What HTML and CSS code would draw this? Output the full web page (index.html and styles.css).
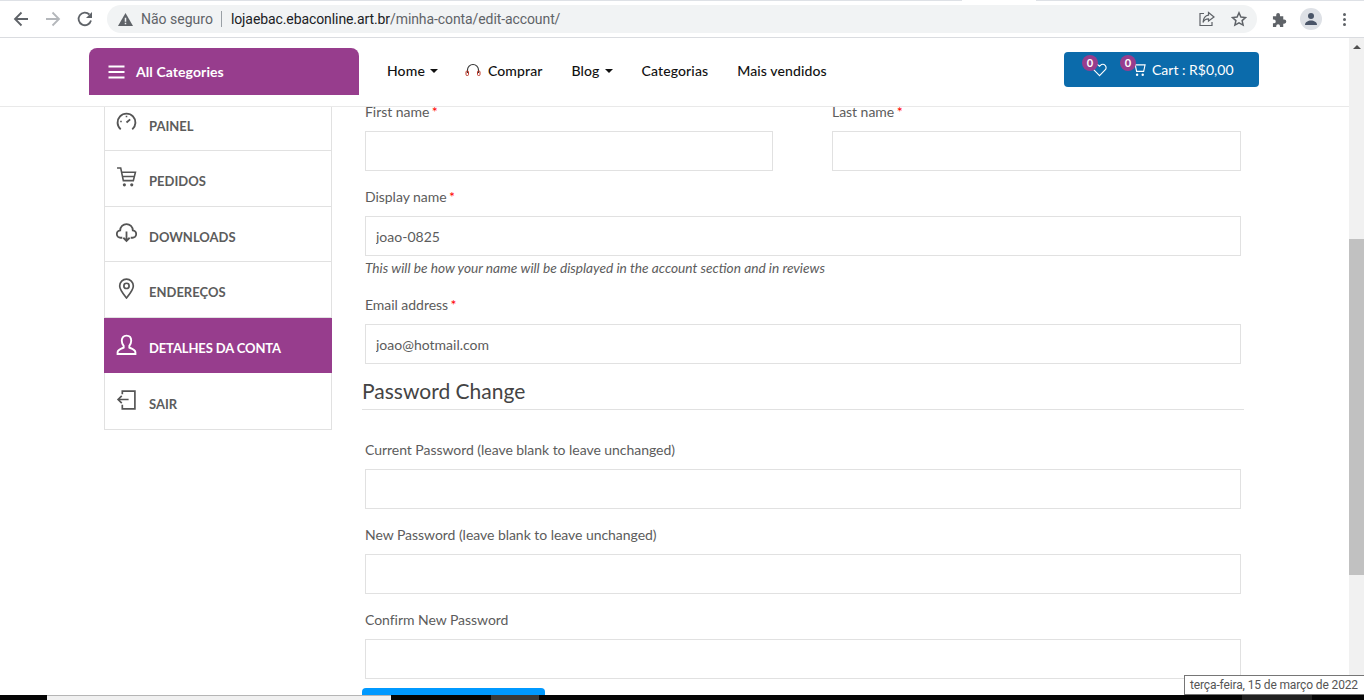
FILE: index.html
```html
<!DOCTYPE html>
<html lang="pt-BR">
<head>
    <meta charset="UTF-8">
    <title>Minha conta</title>
    <link rel="stylesheet" href="styles.css">
</head>
<body>
    <div class="toolbar">
        <svg class="tool-icon" viewBox="0 0 16 16"><path d="M15 8H2M8.500 1.500 2 8l6.500 6.500" fill="none" stroke="#5f6368" stroke-width="1.800"/></svg>
        <svg class="tool-icon" viewBox="0 0 16 16"><path d="M1 8h13M7.500 1.500 14 8l-6.500 6.500" fill="none" stroke="#b4b7bb" stroke-width="1.800"/></svg>
        <svg class="tool-icon" viewBox="0 0 16 16"><path d="M14 9.500A6.300 6.300 0 1 1 12.400 3.500" fill="none" stroke="#5f6368" stroke-width="1.800"/><path d="M15 1v6H9z" fill="#5f6368"/></svg>
        <div class="omnibox">
            <svg class="warn" viewBox="0 0 16 16"><path d="M8 1 16 15H0z" fill="#5f6368"/><path d="M7.200 6h1.600v4.500H7.200zM7.200 11.500h1.600V13H7.200z" fill="#f1f3f4"/></svg>
            <span class="insecure">Não seguro</span>
            <span class="url"><b>lojaebac.ebaconline.art.br</b>/minha-conta/edit-account/</span>
            <svg class="omni-icon share" viewBox="0 0 16 16"><path d="M5 2.500H1v12h12V11" fill="none" stroke="#5f6368" stroke-width="1.200"/><path d="M9.500 1.500 15 6l-5.500 4V7.800C7 7.800 5 9 4 11.500 4 7.500 6.500 4.500 9.500 4.200z" fill="none" stroke="#5f6368" stroke-width="1.200"/></svg>
            <svg class="omni-icon" viewBox="0 0 16 16"><path d="m8 1.800 1.900 4.200 4.600.5-3.400 3.100 1 4.500L8 11.800l-4.100 2.300 1-4.500L1.500 6.500l4.600-.5z" fill="none" stroke="#5f6368" stroke-width="1.500"/></svg>
        </div>
        <svg class="ext" viewBox="0 0 16 16"><path d="M1 4.500h3.500V3a2 2 0 0 1 4 0v1.500H12V8h1a2.200 2.200 0 0 1 0 4.500h-1V16H8.500v-1a2 2 0 0 0-4 0v1H1v-4h1a2 2 0 0 0 0-4H1z" fill="#5f6368"/></svg>
        <div class="avatar"><svg viewBox="0 0 16 16"><circle cx="8" cy="5" r="3" fill="#4a5568"/><path d="M2 14c0-3 3-4.500 6-4.500s6 1.500 6 4.500z" fill="#4a5568"/></svg></div>
        <div class="dots"><i></i><i></i><i></i></div>
    </div>

    <div class="viewport">
        <div class="page">
            <header class="site-header">
                <div class="categories">
                    <svg class="burger" viewBox="0 0 16 14"><path d="M0 1.500h16M0 7h16M0 12.500h16" stroke="#fff" stroke-width="2"/></svg>
                    All Categories
                </div>
                <nav class="main-nav">
                    <a>Home<i class="caret"></i></a>
                    <a class="buy">
                        <svg viewBox="0 0 16 16"><path d="M2.500 10V7a5.500 5.500 0 0 1 11 0v3" fill="none" stroke="#333" stroke-width="1.100"/><rect x="1" y="8" width="2.500" height="4.500" rx="1" fill="none" stroke="#c0392b"/><rect x="12.500" y="8" width="2.500" height="4.500" rx="1" fill="none" stroke="#c0392b"/></svg>
                        Comprar
                    </a>
                    <a>Blog<i class="caret"></i></a>
                    <a>Categorias</a>
                    <a>Mais vendidos</a>
                </nav>
                <div class="cart">
                    <span class="cart-icon wish">
                        <span class="badge">0</span>
                        <svg viewBox="0 0 16 16"><path d="M8 14.500 2 8.500a3.500 3.500 0 0 1 0-5 3.500 3.500 0 0 1 5 0l1 1 1-1a3.500 3.500 0 0 1 5 0 3.500 3.500 0 0 1 0 5z" fill="none" stroke="#fff" stroke-width="1.200"/></svg>
                    </span>
                    <span class="cart-icon basket">
                        <span class="badge">0</span>
                        <svg viewBox="0 0 16 16"><path d="M15 3H4.500L6 10h7.500L15 3zM1 1h2.500L4.500 3" fill="none" stroke="#fff" stroke-width="1.200"/><circle cx="6.500" cy="13.500" r="1.300" fill="#fff"/><circle cx="12.500" cy="13.500" r="1.300" fill="#fff"/></svg>
                    </span>
                    <span class="cart-total">Cart : R$0,00</span>
                </div>
            </header>

            <div class="account">
                <aside class="side-nav">
                    <a class="side-item">
                        <svg viewBox="0 0 20 20"><path d="M4.500 17.500a8.500 8.500 0 1 1 11 0M10 11l3.500-3" fill="none" stroke="#555" stroke-width="1.800"/><path d="M4 10h1.500M10 4.500V6" stroke="#555" stroke-width="1.500"/></svg>
                        Painel
                    </a>
                    <a class="side-item">
                        <svg viewBox="0 0 20 20"><path d="M1 1h3.500l2.500 12h9.500L18.500 5H5.200M6 9h11.500" fill="none" stroke="#555" stroke-width="1.500"/><circle cx="8" cy="17" r="1.500" fill="#555"/><circle cx="15" cy="17" r="1.500" fill="#555"/></svg>
                        Pedidos
                    </a>
                    <a class="side-item">
                        <svg viewBox="0 0 20 20"><path d="M6 15H4.500a3.500 3.500 0 0 1-.5-7 6 6 0 0 1 12 0 3.500 3.500 0 0 1-.5 7H14M10 9v9M7 15l3 3 3-3" fill="none" stroke="#555" stroke-width="1.700"/></svg>
                        Downloads
                    </a>
                    <a class="side-item">
                        <svg viewBox="0 0 20 20"><path d="M10 19C6 14 3.500 11 3.500 7.500a6.500 6.500 0 0 1 13 0C16.500 11 14 14 10 19z" fill="none" stroke="#555" stroke-width="1.600"/><circle cx="10" cy="7.500" r="2.500" fill="none" stroke="#555" stroke-width="1.600"/></svg>
                        Endereços
                    </a>
                    <a class="side-item active">
                        <svg viewBox="0 0 20 20"><path d="M10 1.500c3 0 4.500 2.200 4.500 5 0 2-.8 3.500-1.800 4.800V13c2 .8 5.800 1.800 5.800 4.500V19H1.500v-1.500C1.500 14.800 5.300 13.800 7.300 13v-1.700C6.300 10 5.500 8.500 5.500 6.500c0-2.800 1.500-5 4.500-5z" fill="none" stroke="#fff" stroke-width="1.800"/></svg>
                        Detalhes da conta
                    </a>
                    <a class="side-item">
                        <svg viewBox="0 0 20 20"><path d="M6 5V2h12v17H6v-4M12 10H2M5.500 6.500 2 10l3.500 3.500" fill="none" stroke="#555" stroke-width="1.600"/></svg>
                        Sair
                    </a>
                </aside>

                <form class="account-form">
                    <div class="name-row">
                        <label class="field">
                            <span class="label-text">First name <em>*</em></span>
                            <input type="text">
                        </label>
                        <label class="field">
                            <span class="label-text">Last name <em>*</em></span>
                            <input type="text">
                        </label>
                    </div>
                    <label class="field">
                        <span class="label-text">Display name <em>*</em></span>
                        <input type="text" value="joao-0825">
                        <span class="hint">This will be how your name will be displayed in the account section and in reviews</span>
                    </label>
                    <label class="field email">
                        <span class="label-text">Email address <em>*</em></span>
                        <input type="text" value="joao@hotmail.com">
                    </label>
                    <fieldset class="password-box">
                        <legend>Password Change</legend>
                        <label class="field">
                            <span class="label-text">Current Password (leave blank to leave unchanged)</span>
                            <input type="password">
                        </label>
                        <label class="field">
                            <span class="label-text">New Password (leave blank to leave unchanged)</span>
                            <input type="password">
                        </label>
                        <label class="field">
                            <span class="label-text">Confirm New Password</span>
                            <input type="password">
                        </label>
                    </fieldset>
                    <button type="button" class="save-btn"></button>
                </form>
            </div>
        </div>
        <div class="scrollbar">
            <span class="arrow"></span>
            <div class="thumb"></div>
        </div>
    </div>

    <div class="taskbar">
        <span class="task-a"></span>
        <span class="task-b"></span>
        <span class="task-c"></span>
    </div>
    <div class="date-tip">terça-feira, 15 de março de 2022</div>
</body>
</html>
```

FILE: styles.css
```css
* {
    box-sizing: border-box;
    margin: 0;
    padding: 0;
}

html, body {
    height: 700px;
    overflow: hidden;
}

body {
    display: flex;
    flex-direction: column;
    font-family: "Lato", sans-serif;
    font-size: 14px;
    color: #5c5c5c;
    background: #fff;
}

/* browser chrome */
.toolbar {
    height: 38px;
    flex: none;
    display: flex;
    align-items: center;
    padding: 0 0 0 13px;
    background: #fff;
    border-top: 1px solid #dee1e6;
    border-bottom: 1px solid #dadce0;
    position: relative;
}

.toolbar::before {
    content: "";
    position: absolute;
    left: 962px;
    top: -1px;
    width: 74px;
    height: 1px;
    background: #fff;
}

.tool-icon {
    width: 16px;
    height: 16px;
    margin-right: 16px;
}

.omnibox {
    width: 1150px;
    height: 28px;
    margin-left: -2px;
    display: flex;
    align-items: center;
    padding: 0 0 0 11px;
    background: #f1f3f4;
    border-radius: 14px;
    font-family: "Roboto", sans-serif;
    font-size: 14px;
}

.warn {
    width: 15px;
    height: 15px;
    margin-right: 8px;
}

.insecure {
    color: #5f6368;
    padding-right: 8px;
    border-right: 1px solid #9aa0a6;
    margin-right: 9px;
    line-height: 16px;
}

.url {
    color: #5f6368;
    flex: 1;
    letter-spacing: -0.09px;
}

.url b {
    font-weight: 400;
    color: #202124;
}

.omni-icon {
    width: 16px;
    height: 16px;
    margin-right: 10px;
}

.share {
    margin-right: 16px;
}

.ext {
    width: 15px;
    height: 15px;
    margin-left: 15px;
}

.avatar {
    width: 22px;
    height: 22px;
    margin-left: 13px;
    padding: 3px;
    border-radius: 50%;
    background: #dee1e6;
}

.avatar svg {
    display: block;
}

.dots {
    display: flex;
    flex-direction: column;
    gap: 2px;
    margin-left: 21px;
}

.dots i {
    width: 3px;
    height: 3px;
    border-radius: 50%;
    background: #5f6368;
}

/* page */
.viewport {
    flex: 1;
    min-height: 0;
    display: flex;
}

.page {
    flex: 1;
    min-width: 0;
    overflow: hidden;
    display: flex;
    flex-direction: column;
}

.site-header {
    height: 69px;
    flex: none;
    display: flex;
    padding: 10px 90px 0 89px;
    border-bottom: 1px solid #e9e9e9;
    position: relative;
    z-index: 1;
    background: #fff;
}

.categories {
    width: 270px;
    height: 47px;
    display: flex;
    align-items: center;
    gap: 11px;
    padding-left: 19px;
    background: #973d8d;
    border-radius: 8px 8px 0 0;
    color: #fff;
    font-size: 14px;
    font-weight: 700;
    letter-spacing: 0.08px;
}

.burger {
    width: 17px;
    height: 14px;
}

.main-nav {
    display: flex;
    align-items: center;
    gap: 29px;
    height: 45px;
    margin-left: 28px;
    flex: 1;
    font-size: 14px;
    font-weight: 500;
    letter-spacing: 0.12px;
    color: #111;
}

.main-nav a {
    display: flex;
    align-items: center;
}

.main-nav .buy {
    margin-left: -2px;
}

.buy svg {
    width: 16px;
    height: 16px;
    margin-right: 7px;
}

.caret {
    margin-left: 5px;
    border-top: 4px solid #111;
    border-left: 4px solid transparent;
    border-right: 4px solid transparent;
}

.cart {
    width: 195px;
    height: 35px;
    margin-top: 4px;
    display: flex;
    align-items: center;
    padding-left: 28px;
    background: #0b6bab;
    border-radius: 4px;
    color: #fff;
    font-size: 14px;
}

.cart-icon {
    position: relative;
    display: block;
    width: 15px;
    height: 15px;
}

.cart-icon svg {
    display: block;
    width: 15px;
    height: 15px;
}

.basket {
    margin-left: 24px;
    margin-right: 6px;
}

.badge {
    position: absolute;
    top: -7px;
    left: -10px;
    width: 16px;
    height: 16px;
    border-radius: 50%;
    background: #973d8d;
    font-size: 11px;
    font-weight: 700;
    line-height: 15px;
    text-align: center;
}

.basket .badge {
    left: -11px;
}

.account {
    display: flex;
    margin-top: -13px;
    padding-left: 104px;
}

.side-nav {
    width: 228px;
    flex: none;
    align-self: flex-start;
    margin-top: 0.5px;
    border: 1px solid #e1e1e1;
}

.side-item {
    height: 55.5px;
    display: flex;
    align-items: center;
    gap: 12px;
    padding: 6px 0 0 11px;
    border-bottom: 1px solid #e1e1e1;
    font-size: 13px;
    font-weight: 700;
    text-transform: uppercase;
    color: #5c5c5c;
}

.side-item:last-child {
    border-bottom: 0;
}

.side-item svg {
    width: 21px;
    height: 21px;
    flex: none;
    position: relative;
    top: -4px;
}

.side-item.active {
    margin: 0 -1px;
    padding-left: 12px;
    background: #973d8d;
    border-bottom: 0;
    color: #fff;
    letter-spacing: -0.12px;
}

.account-form {
    width: 882px;
    margin-left: 30px;
    padding-top: 9px;
    display: flex;
    flex-direction: column;
}

.name-row {
    display: grid;
    grid-template-columns: 408px 409px;
    gap: 59px;
    padding: 0 3px;
}

.field {
    display: block;
    padding: 0 3px;
    margin-bottom: 17px;
}

.label-text {
    display: block;
    height: 28px;
    line-height: 17px;
    letter-spacing: -0.04px;
}

.label-text em {
    margin-left: -1px;
    font-style: normal;
    color: #f00;
}

.field input {
    display: block;
    width: 100%;
    height: 40px;
    padding: 0 10px;
    border: 1px solid #e1e1e1;
    font-family: "Lato", sans-serif;
    font-size: 14px;
    color: #5c5c5c;
    outline: 0;
}

.name-row .field {
    padding: 0;
}

.hint {
    display: block;
    margin: 3px 0 3px;
    font-size: 13.7px;
    font-style: italic;
    line-height: 17px;
}

.email {
    margin-bottom: 13px;
}

.password-box {
    border: 0;
}

.password-box legend {
    display: block;
    width: 100%;
    height: 33px;
    margin-bottom: 31px;
    border-bottom: 1px solid #e1e1e1;
    font-size: 21px;
    line-height: 28px;
    color: #444;
}

.password-box .field:last-child {
    margin-bottom: 9px;
}

.save-btn {
    width: 183px;
    height: 40px;
    background: #0099ff;
    border: 0;
    border-radius: 4px;
    color: #fff;
}

.scrollbar {
    width: 15px;
    flex: none;
    position: relative;
    background: #f1f1f1;
}

.arrow {
    position: absolute;
    top: 7px;
    left: 4px;
    border-bottom: 4px solid #505050;
    border-left: 4px solid transparent;
    border-right: 4px solid transparent;
}

.thumb {
    position: absolute;
    top: 201px;
    left: 0;
    width: 100%;
    height: 336px;
    background: #c1c1c1;
}

/* windows taskbar peeking in at the bottom */
.taskbar {
    height: 5px;
    flex: none;
    display: flex;
    background: #050505;
    position: relative;
    z-index: 2;
}

.task-a {
    width: 344px;
    margin-left: 47px;
    background: #f0f0f0;
    border-top: 1px solid #b5b5b5;
}

.task-b {
    width: 48px;
    margin-left: 100px;
    background: #3a3a3a;
}

.task-c {
    width: 70px;
    margin-left: 703px;
    background: #222;
}

.date-tip {
    position: absolute;
    left: 1184px;
    top: 675px;
    width: 180px;
    height: 20px;
    padding-left: 5px;
    background: #fff;
    border: 1px solid #767676;
    border-right: 0;
    font-family: "Roboto", sans-serif;
    font-size: 12px;
    letter-spacing: -0.13px;
    line-height: 18px;
    color: #555;
    z-index: 3;
}
```
